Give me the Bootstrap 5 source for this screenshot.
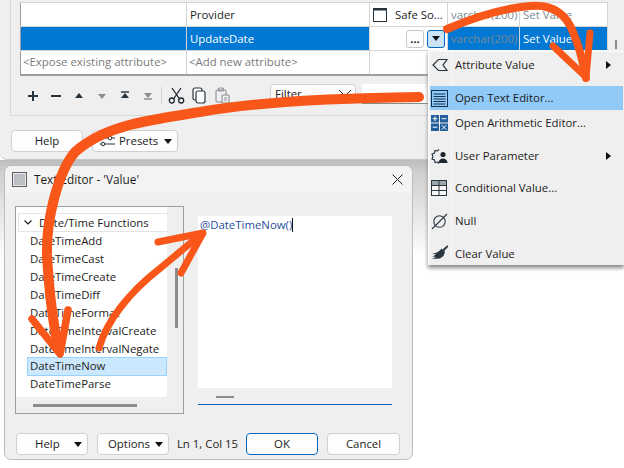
<!DOCTYPE html>
<html lang="en">
<head>
<meta charset="utf-8">
<title>Text Editor</title>
<link href="https://cdn.jsdelivr.net/npm/bootstrap@5.3.0/dist/css/bootstrap.min.css" rel="stylesheet">
<script src="https://cdn.jsdelivr.net/npm/bootstrap@5.3.0/dist/js/bootstrap.bundle.min.js"></script>
<style>
html,body{margin:0;height:100%;}
body{width:624px;height:468px;overflow:hidden;background:#fff;position:relative;font-family:"Open Sans","Liberation Sans",sans-serif;font-size:11.4px;color:#1c1c1c;line-height:1.2;}
.win-main{position:absolute;left:0;top:0;width:624px;height:160px;background:#efefef;border-bottom:1px solid #c8c8c8;border-bottom-left-radius:7px;}
.win-shade{position:absolute;left:0;top:160px;width:428px;height:110px;background:linear-gradient(#bdbdbd,#d0d0d0 12%,#fff 90%);}
.attr-panel{margin-left:10px;height:116px;padding:2px 0 0 9px;border-left:1px solid #d9d9d9;border-bottom:1px solid #d9d9d9;}
.attr-table{width:587px;table-layout:fixed;border-collapse:collapse;background:#fff;margin:0;}
.attr-table col:nth-child(1){width:166px;}
.attr-table col:nth-child(2){width:183px;}
.attr-table col:nth-child(3){width:78px;}
.attr-table col:nth-child(4){width:72px;}
.attr-table col:nth-child(5){width:88px;}
.attr-table td{height:24px;padding:0 3px;border:1px solid #d4d4d4;white-space:nowrap;overflow:hidden;vertical-align:middle;}
.attr-table tr:last-child td{border-bottom:2px solid #9c9ca4;}
.attr-table td:first-child{border-left:1px solid #9c9ca4;}
.attr-table .sel{background:#0078d4;color:#fff;}
.attr-table .ghost{color:#7d8a94;}
.attr-table .hint{color:#7b7b7b;padding-left:2px;}
.attr-table .plain{background:#fff;padding:0;}
.cell-btns{display:flex;justify-content:flex-end;gap:3px;padding-right:2px;}
.mini-btn{width:18px;height:18px;border:1px solid #c8c8c8;border-radius:3px;background:#fdfdfd;display:flex;align-items:center;justify-content:center;font-weight:700;font-size:11px;line-height:10px;padding:0;color:#111;}
.mini-btn.on{background:#cce4f7;border-color:#0067c0;}
.tool-row{height:34px;padding-left:1px;margin-top:3px;}
.tool-slot{width:23px;display:flex;justify-content:center;align-items:center;flex:none;}
.tool-sep{width:1px;height:17px;background:#cfcfcf;margin:0 3px 0 2px;flex:none;}
.filter-sel{position:absolute;left:270px;top:84px;width:86px;height:20px;background:#fbfbfb;border:1px solid #d0d0d0;border-radius:3px;padding:2px 4px;}
.filter-sel svg{position:absolute;right:3px;top:4px;}
.filter-box{position:absolute;left:362px;top:84px;width:66px;height:20px;background:#fff;border-bottom:1px solid #8a8a8a;}
.scroll-nub{position:absolute;left:615px;top:40px;width:2px;height:9px;background:#8a8a8a;}
.foot-row{padding:14px 0 0 11px;column-gap:9px;}
.wbtn{--bs-btn-font-size:11.4px;height:22px;padding:0;border:1px solid #d0d0d0;border-radius:4px;background:#fdfdfd;color:#1c1c1c;display:flex;align-items:center;justify-content:center;position:relative;line-height:1;}
.wbtn.def{border-color:#0067c0;}
.caret-d{width:0;height:0;border-left:4.5px solid transparent;border-right:4.5px solid transparent;border-top:5px solid #111;}
.caret-pos{position:absolute;right:5px;top:8px;}
.w72{width:72px;}.w86{width:86px;}.w73{width:73px;}
.gap-9{margin-right:9px;}
.start-18{justify-content:flex-start;padding-left:18px;}
.start-10{justify-content:flex-start;padding-left:10px;}
.start-7{justify-content:flex-start;padding-left:7px;gap:4px;}
.dlg{position:absolute;left:4px;top:165px;width:409px;height:295px;background:#efefef;border:1px solid #bdbdbd;border-radius:7px;}
.dlg-title{height:27px;background:#f3f3f3;border-radius:7px 7px 0 0;padding:0 0 0 7px;gap:7px;font-size:11.8px;}
.dlg-ico{width:15px;height:15px;background:#bcc0c4;border:1px solid #5b6168;box-shadow:inset 0 0 0 1px #e8e8e8;}
.dlg-x{margin-left:auto;margin-right:9px;}
.dlg-body{height:218px;padding:13px 0 0 10px;}
.fn-panel{width:169px;height:208px;border:1px solid #9e9e9e;background:#efefef;position:relative;flex:none;}
.fn-list{width:151px;height:190px;background:#fff;padding-top:7px;overflow:hidden;border-radius:0 0 3px 0;}
.fn-head{height:19px;margin-left:2px;border:1px solid #e4e4e4;border-right:0;padding-left:5px;gap:7px;display:flex;align-items:center;margin-bottom:-1px;margin-top:-1px;}
.fn-list .list-group{margin-top:1px;padding-top:0;}
.fn-list .list-group-item{border:0;background:transparent;height:18px;padding:0 0 0 14px;line-height:18px;margin-top:0;color:#1c1c1c;font-size:inherit;border-radius:0;white-space:nowrap;}
.fn-list .list-group-item.active{background:#cce8ff;box-shadow:inset 0 0 0 1px #99d1ff;margin-left:11px;padding-left:3px;height:19px;margin-bottom:-1px;color:#1c1c1c;}
.vthumb{position:absolute;left:159px;top:61px;width:3px;height:60px;background:#8c8c8c;}
.hthumb{position:absolute;left:17px;top:197px;width:104px;height:3px;background:#8c8c8c;}
.editor{width:194px;height:189px;margin:10px 0 0 14px;background:#efefef;border-bottom:1px solid #0067c0;position:relative;flex:none;}
.editor-in{height:172px;background:#fff;padding:2px;color:#1f4fa0;}
.caret-line{display:inline-block;width:1px;height:14px;background:#111;vertical-align:-3px;}
.ethumb{position:absolute;left:18px;top:180px;width:18px;height:2px;background:#8c8c8c;}
.dlg-foot{padding:22px 0 0 11px;}
.ln-col{width:77px;text-align:center;flex:none;}
.ctx{position:absolute;left:428px;top:50px;width:196px;height:215px;background:#efefef;border:0;border-left:2px solid #f8f8f8;border-top:2px solid #f8f8f8;border-radius:0;padding:0;margin:0;box-shadow:0 3px 4px #888;font-size:inherit;display:block;z-index:5;}
.ctx::before{content:"";position:absolute;left:21px;top:0;bottom:0;width:1px;background:#f8f8f8;}
.ctx .dropdown-item{height:24px;padding:0 0 0 25px;display:flex;align-items:center;margin-top:8.6px;color:#1c1c1c;position:relative;background:transparent;font-size:inherit;}
.ctx .dropdown-item:first-child{margin-top:1px;}
.ctx .tight{margin-top:1.4px;}
.ctx .dropdown-item.active{background:#91c9f7;color:#1c1c1c;width:193px;}
.ctx svg.mi{position:absolute;left:1px;top:4px;}
.ctx .sub{position:absolute;left:176px;top:8px;width:0;height:0;border-top:4px solid transparent;border-bottom:4px solid transparent;border-left:5px solid #111;}
.ink{position:absolute;left:0;top:0;z-index:10;pointer-events:none;}
</style>
</head>
<body>
<div class="win-shade"></div>
<section class="win-main">
  <div class="attr-panel">
    <table class="attr-table">
      <colgroup><col><col><col><col><col></colgroup>
      <tr>
        <td></td><td>Provider</td>
        <td><span class="d-flex align-items-center gap-2"><svg width="14" height="14" viewBox="0 0 14 14"><rect x=".5" y=".5" width="13" height="13" fill="#fff" stroke="#26323c"/><path d="M1 1.5h12" stroke="#26323c" stroke-width="2"/></svg>Safe So...</span></td>
        <td class="ghost">varchar(200)</td><td class="ghost">Set Value</td>
      </tr>
      <tr>
        <td class="sel"></td><td class="sel">UpdateDate</td>
        <td class="plain"><div class="cell-btns"><button class="mini-btn" type="button">...</button><button class="mini-btn on" type="button"><span class="caret-d"></span></button></div></td>
        <td class="sel ghost">varchar(200)</td><td class="sel">Set Value</td>
      </tr>
      <tr>
        <td class="hint">&lt;Expose existing attribute&gt;</td><td class="hint">&lt;Add new attribute&gt;</td><td></td><td></td><td></td>
      </tr>
    </table>
    <div class="tool-row d-flex align-items-center">
      <span class="tool-slot"><svg width="12" height="12" viewBox="0 0 12 12"><path d="M6 1v10M1 6h10" stroke="#26323c" stroke-width="2"/></svg></span>
      <span class="tool-slot"><svg width="12" height="12" viewBox="0 0 12 12"><path d="M1 6h10" stroke="#26323c" stroke-width="2"/></svg></span>
      <span class="tool-slot"><svg width="10" height="8" viewBox="0 0 10 8"><path d="M5 1l4 5H1z" fill="#26323c"/></svg></span>
      <span class="tool-slot"><svg width="10" height="8" viewBox="0 0 10 8"><path d="M1 2h8L5 7z" fill="#8c8c8c"/></svg></span>
      <span class="tool-slot"><svg width="10" height="9" viewBox="0 0 10 9"><path d="M1 1h8" stroke="#26323c" stroke-width="1.4"/><path d="M5 2l4 5H1z" fill="#26323c"/></svg></span>
      <span class="tool-slot"><svg width="10" height="9" viewBox="0 0 10 9"><path d="M1 8h8" stroke="#8c8c8c" stroke-width="1.4"/><path d="M1 2h8L5 7z" fill="#8c8c8c"/></svg></span>
      <span class="tool-sep"></span>
      <span class="tool-slot"><svg width="17" height="17" viewBox="0 0 17 17" fill="none" stroke="#1e2730" stroke-width="1.3"><path d="M4 1l7.500 11M13 1L5.500 12"/><circle cx="3.800" cy="13.500" r="2.500"/><circle cx="13.200" cy="13.500" r="2.500"/></svg></span>
      <span class="tool-slot"><svg width="15" height="17" viewBox="0 0 15 17" fill="#fff" stroke="#2b3540" stroke-width="1.2"><rect x="1" y="1" width="9" height="12" rx="2"/><rect x="4" y="4" width="9" height="12" rx="2"/></svg></span>
      <span class="tool-slot"><svg width="15" height="17" viewBox="0 0 15 17" fill="none" stroke="#8c9096" stroke-width="1.1"><rect x="1" y="3" width="10" height="12" rx="1.500"/><rect x="3.500" y="1" width="5" height="3" rx="1"/><rect x="7" y="8" width="7" height="8" rx="1" fill="#efefef"/><path d="M9 11h3M9 13h3"/></svg></span>
    </div>
  </div>
  <div class="filter-sel">Filter<svg width="14" height="8" viewBox="0 0 14 8"><path d="M1 1l6 6 6-6" fill="none" stroke="#333"/></svg></div>
  <div class="filter-box"></div>
  <span class="scroll-nub"></span>
  <div class="foot-row d-flex">
    <button class="btn wbtn w72" type="button">Help</button>
    <button class="btn wbtn w86 start-7" type="button"><svg width="15" height="12" viewBox="0 0 15 12" fill="none" stroke="#26323c"><path d="M0 3h15M0 9h15"/><circle cx="10" cy="3" r="1.800" fill="#fff"/><circle cx="3" cy="9" r="1.800" fill="#fff"/></svg>Presets<span class="caret-d caret-pos"></span></button>
  </div>
</section>

<section class="dlg">
  <div class="dlg-title d-flex align-items-center">
    <span class="dlg-ico"></span><span>Text Editor - 'Value'</span>
    <svg class="dlg-x" width="11" height="11" viewBox="0 0 11 11"><path d="M.5.5l10 10M10.500.5l-10 10" stroke="#222" stroke-width="1"/></svg>
  </div>
  <div class="dlg-body d-flex">
    <div class="fn-panel">
      <div class="fn-list">
        <div class="fn-head"><svg width="8" height="5" viewBox="0 0 8 5"><path d="M.5.5L4 4 7.500.5" fill="none" stroke="#222" stroke-width="1.2"/></svg>Date/Time Functions</div>
        <div class="list-group">
          <div class="list-group-item">DateTimeAdd</div>
          <div class="list-group-item">DateTimeCast</div>
          <div class="list-group-item">DateTimeCreate</div>
          <div class="list-group-item">DateTimeDiff</div>
          <div class="list-group-item">DateTimeFormat</div>
          <div class="list-group-item">DateTimeIntervalCreate</div>
          <div class="list-group-item">DateTimeIntervalNegate</div>
          <div class="list-group-item active">DateTimeNow</div>
          <div class="list-group-item">DateTimeParse</div>
        </div>
      </div>
      <span class="vthumb"></span><span class="hthumb"></span>
    </div>
    <div class="editor">
      <div class="editor-in">@DateTimeNow()<span class="caret-line"></span></div>
      <span class="ethumb"></span>
    </div>
  </div>
  <div class="dlg-foot d-flex align-items-center">
    <button class="btn wbtn w72 start-18 gap-9" type="button">Help<span class="caret-d caret-pos"></span></button>
    <button class="btn wbtn w72 start-10" type="button">Options<span class="caret-d caret-pos"></span></button>
    <span class="ln-col">Ln 1, Col 15</span>
    <button class="btn wbtn def w72 gap-9" type="button">OK</button>
    <button class="btn wbtn w73" type="button">Cancel</button>
  </div>
</section>

<ul class="dropdown-menu ctx">
  <li class="dropdown-item"><svg class="mi" width="17" height="16" viewBox="0 0 17 16"><path d="M16 2.500H7.500L2 8l5.500 5.500H16L12 8z" fill="none" stroke="#26323c" stroke-width="1.2"/></svg>Attribute Value<span class="sub"></span></li>
  <li class="dropdown-item active"><svg class="mi" width="17" height="17" viewBox="0 0 17 17"><rect x=".5" y=".5" width="16" height="16" fill="none" stroke="#12304f"/><path d="M2.500 4h12M2.500 6.500h12M2.500 9h12M2.500 11.500h12M2.500 14h12" stroke="#12304f"/></svg>Open Text Editor...</li>
  <li class="dropdown-item tight"><svg class="mi" width="17" height="16" viewBox="0 0 17 16"><path d="M0 0h8v7.500H0zM9 0h8v7.500H9zM0 8.500h8V16H0zM9 8.500h8V16H9z" fill="#235f9c"/><path d="M4 1.500v4.500M1.700 3.700h4.600M10.700 3.700h4.600M1.700 12.200h4.600M10.800 10.200l4.400 4.400M15.200 10.200l-4.400 4.400" stroke="#fff"/></svg>Open Arithmetic Editor...</li>
  <li class="dropdown-item"><svg class="mi" width="17" height="17" viewBox="0 0 17 17"><path d="M8 1.500L6.500 3 4 2.500 3.500 5 1 6l1 2.500L1 11l2.500 1 .5 2.500 2.500-.5L8 15.500" fill="none" stroke="#26323c" stroke-width="1.1"/><circle cx="12" cy="6.500" r="2.600" fill="#1e2730"/><path d="M7.500 15c0-6 9-6 9 0z" fill="#1e2730"/></svg>User Parameter<span class="sub"></span></li>
  <li class="dropdown-item"><svg class="mi" width="16" height="16" viewBox="0 0 16 16"><rect x=".5" y=".5" width="15" height="15" fill="#f8f8f8" stroke="#26323c"/><rect x="1" y="1" width="14" height="4.500" fill="#9aa7ad"/><path d="M8 .5v15M.5 5.500h15M.5 10.500h15" stroke="#26323c"/></svg>Conditional Value...</li>
  <li class="dropdown-item"><svg class="mi" width="17" height="17" viewBox="0 0 17 17" fill="none" stroke="#2b3540" stroke-width="1.1"><circle cx="8.500" cy="8.500" r="5.700"/><path d="M1 16L16 1"/></svg>Null</li>
  <li class="dropdown-item"><svg class="mi" width="17" height="15" viewBox="0 0 17 15"><path d="M16.500 0l-5 4.500 1.500 1.700 4-4.200z" fill="#2b3540"/><path d="M10.500 3.500l3.500 3.500-1.500 4L9 13.500 1 14l4-2-3.500-.5L5 9.500 1 8.500c4 0 7-1.500 9.500-5z" fill="#2b3540"/></svg>Clear Value</li>
</ul>

<svg class="ink" width="624" height="468" viewBox="0 0 624 468" fill="none" stroke="#f9561a" stroke-linecap="round" stroke-linejoin="round">
  <path stroke-width="8" d="M447 29C475 17 505 8 530 6C552 4 566 14 573 32C579 46 583 62 586 78"/>
  <path stroke-width="7" d="M553 46L586 77L590 33"/>
  <path stroke-width="10" d="M419 97C340 98 260 101 200 112C150 120 105 125 75 152C58 172 46 220 47 255C49 290 52 320 59 350"/>
  <path stroke-width="7.500" d="M32 319L60 354L68 310"/>
  <path stroke-width="7" d="M99 348C107 320 130 292 158 270C175 256 190 243 202 234"/>
  <path stroke-width="7" d="M158 242L203 233L181 273"/>
</svg>
</body>
</html>
